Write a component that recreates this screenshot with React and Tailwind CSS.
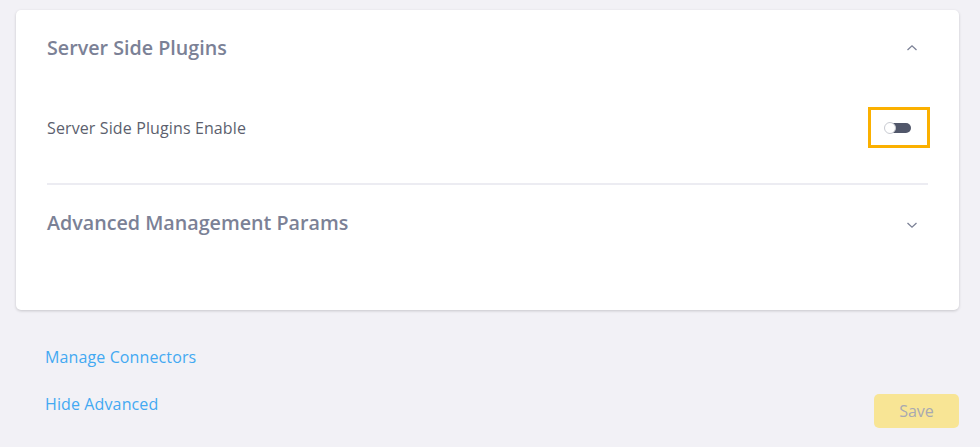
export default function App() {
  const font = { fontFamily: '"Open Sans", "Noto Sans", sans-serif' };
  return (
    <div className="w-[980px] h-[447px] bg-[#f2f1f6] overflow-hidden" style={font}>
      <div className="pt-[10px] pl-[16px] pr-[21px]">
        <div className="bg-white rounded-[5px] shadow-[0_1px_3px_rgba(0,0,0,0.18)] px-[31px] pb-[49px]">
          <div className="h-[76px] flex items-center justify-between">
            <span className="text-[19.7px] font-semibold text-[#7b8196]">Server Side Plugins</span>
            <svg width="12" height="8" viewBox="0 0 12 8" className="mr-[10px]">
              <path d="M1.5 6 L6 1.8 L10.5 6" fill="none" stroke="#7b8196" strokeWidth="1.3" />
            </svg>
          </div>
          <div className="mt-[21px] flex items-center justify-between">
            <span className="text-[16px] tracking-[0.12px] text-[#5c5f6e]">Server Side Plugins Enable</span>
            <div className="w-[62px] h-[41px] border-[3px] border-[#fbb000] mr-[-2px] flex items-center justify-center">
              <div className="relative w-[27px] h-[12px] mr-[3px] mt-[1px]">
                <div className="absolute left-[3px] right-0 top-[1px] h-[10px] rounded-full bg-[#51576a]" />
                <div className="absolute left-0 top-0 w-[12px] h-[12px] rounded-full bg-white border border-[#c9cbd2]" />
              </div>
            </div>
          </div>
          <div className="mt-[35px] h-[2px] bg-[#ececf2]" />
          <div className="h-[76px] flex items-center justify-between">
            <span className="text-[19.7px] font-semibold text-[#7b8196]">Advanced Management Params</span>
            <svg width="12" height="8" viewBox="0 0 12 8" className="mr-[10px] mt-[3px]">
              <path d="M1.5 2 L6 6.2 L10.5 2" fill="none" stroke="#7b8196" strokeWidth="1.3" />
            </svg>
          </div>
        </div>
      </div>
      <div className="flex justify-between pl-[45px] pr-[21px] mt-[36px]">
        <div className="flex flex-col">
          <span className="text-[16px] tracking-[0.12px] text-[#43a9f2] h-[22px] leading-[22px]">Manage Connectors</span>
          <span className="text-[16px] tracking-[0.12px] text-[#43a9f2] h-[22px] leading-[22px] mt-[25px]">Hide Advanced</span>
        </div>
        <div className="self-end mb-[-13px] w-[85px] h-[34px] rounded-[5px] bg-[#f8e595] flex items-center justify-center text-[16px] text-[#a8a9b2]">
          Save
        </div>
      </div>
    </div>
  );
}
